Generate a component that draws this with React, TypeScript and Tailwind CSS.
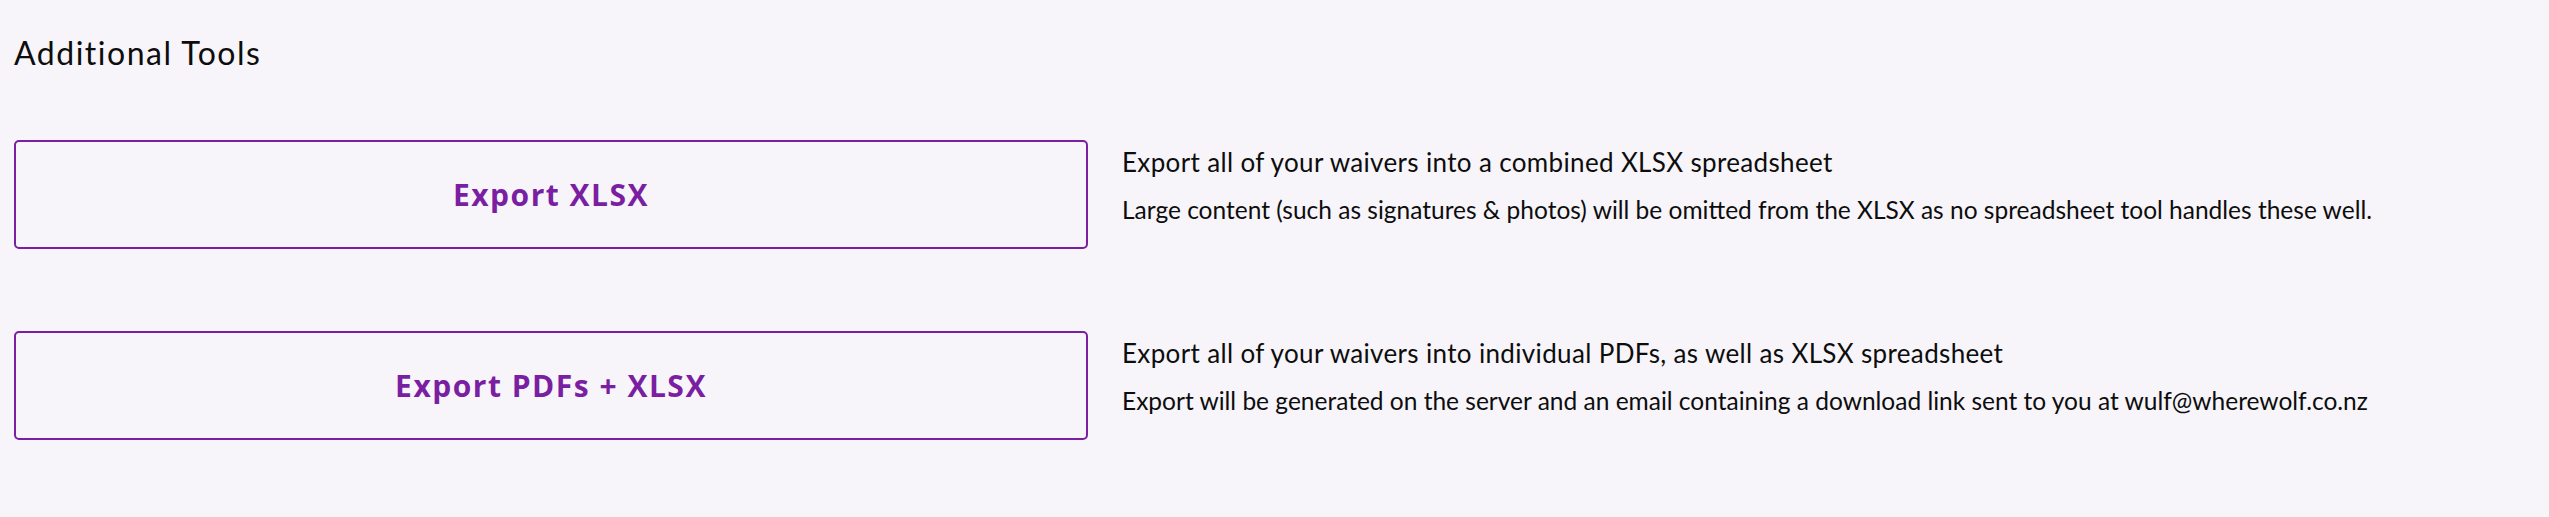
import React from 'react';

type Tool = { label: string; title: string; detail: string };

const TOOLS: Tool[] = [
  {
    label: 'Export XLSX',
    title: 'Export all of your waivers into a combined XLSX spreadsheet',
    detail: 'Large content (such as signatures & photos) will be omitted from the XLSX as no spreadsheet tool handles these well.',
  },
  {
    label: 'Export PDFs + XLSX',
    title: 'Export all of your waivers into individual PDFs, as well as XLSX spreadsheet',
    detail: 'Export will be generated on the server and an email containing a download link sent to you at wulf@wherewolf.co.nz',
  },
];

const App: React.FC = () => {
  return (
    <div className="min-h-screen w-full bg-[#f7f5fa] text-[#0d0d0d] font-['Lato',sans-serif]">
      <div className="pl-[14px] pt-[34px]">
        <h2 className="text-[32px] leading-[1.2] font-normal tracking-[1.5px]">Additional Tools</h2>

        <div className="mt-[68px] flex flex-col gap-[82px]">
          {TOOLS.map((tool) => (
            <div key={tool.label} className="flex items-start">
              <button className="w-[1074px] h-[109px] shrink-0 rounded-[5px] border-2 border-[#7b1fa2] bg-transparent text-[#7b1fa2] font-['Open_Sans',sans-serif] text-[30px] font-bold tracking-[1.5px] flex items-center justify-center">
                {tool.label}
              </button>
              <div className="ml-[34px] pt-[7px]">
                <p className="text-[26px] leading-[30px] tracking-[0.35px]">{tool.title}</p>
                <p className="mt-[20px] text-[24.5px] leading-[26px]">{tool.detail}</p>
              </div>
            </div>
          ))}
        </div>
      </div>
    </div>
  );
};

export default App;
